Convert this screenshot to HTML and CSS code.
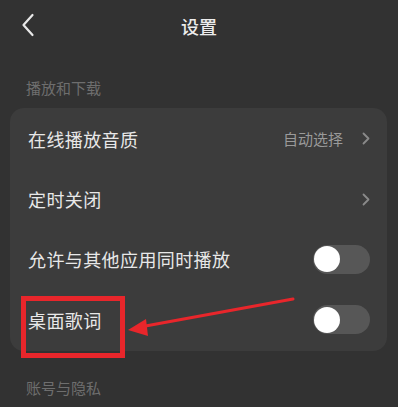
FILE: index.html
```html
<!DOCTYPE html>
<html lang="zh">
<head>
<meta charset="utf-8">
<link rel="stylesheet" href="styles.css">
</head>
<body>
<div class="page">
  <header class="topbar">
    <svg class="back" width="14" height="24" viewBox="0 0 14 24"><path d="M11.5 2 L2.5 12 L11.5 22" fill="none" stroke="#e8e8e8" stroke-width="2.2" stroke-linecap="round" stroke-linejoin="round"/></svg>
    <div class="title">设置</div>
  </header>
  <div class="section-label">播放和下载</div>
  <div class="card">
    <div class="row">
      <span class="label">在线播放音质</span>
      <span class="right"><span class="value">自动选择</span><svg class="chev" width="8" height="13" viewBox="0 0 8 13"><path d="M1.5 1.5 L6.5 6.5 L1.5 11.5" fill="none" stroke="#8a8a8a" stroke-width="1.8" stroke-linecap="round" stroke-linejoin="round"/></svg></span>
    </div>
    <div class="row">
      <span class="label">定时关闭</span>
      <span class="right"><svg class="chev" width="8" height="13" viewBox="0 0 8 13"><path d="M1.5 1.5 L6.5 6.5 L1.5 11.5" fill="none" stroke="#8a8a8a" stroke-width="1.8" stroke-linecap="round" stroke-linejoin="round"/></svg></span>
    </div>
    <div class="row">
      <span class="label">允许与其他应用同时播放</span>
      <span class="toggle"><span class="knob"></span></span>
    </div>
    <div class="row">
      <span class="label">桌面歌词</span>
      <span class="toggle"><span class="knob"></span></span>
    </div>
  </div>
  <div class="section-label second">账号与隐私</div>

  <div class="highlight"></div>
  <svg class="arrow" width="398" height="407" viewBox="0 0 398 407">
    <line x1="293" y1="299" x2="140" y2="327" stroke="#e8262b" stroke-width="3" stroke-linecap="round"/>
    <polygon points="128,330 146,319 148,336" fill="#e8262b"/>
  </svg>
</div>
</body>
</html>
```

FILE: styles.css
```css
html, body {
  margin: 0;
  padding: 0;
  background: #323232;
}
.page {
  position: relative;
  width: 398px;
  height: 407px;
  overflow: hidden;
  font-family: "Noto Sans CJK SC", "Noto Sans", sans-serif;
  color: #e6e6e6;
}
.topbar {
  position: relative;
  height: 52px;
  display: flex;
  align-items: center;
  justify-content: center;
}
.back {
  position: absolute;
  left: 21px;
  top: 13px;
}
.title {
  font-size: 18px;
  color: #ececec;
  line-height: 24px;
  font-weight: 500;
}
.section-label {
  margin-top: 26px;
  padding-left: 26px;
  font-size: 15px;
  line-height: 20px;
  color: #6e6e6e;
}
.section-label.second {
  margin-top: 27px;
}
.card {
  margin: 10px 11px 0 10px;
  background: #3c3c3c;
  border-radius: 14px;
  padding: 0 0 1px;
}
.row {
  height: 61px;
  display: flex;
  align-items: center;
  justify-content: space-between;
  padding: 0 17px 0 18px;
}
.row:nth-child(2), .row:nth-child(3) {
  height: 60px;
}
.label {
  font-size: 18px;
  letter-spacing: 0.4px;
  color: #e8e8e8;
}
.right {
  display: flex;
  align-items: center;
  gap: 19px;
}
.value {
  font-size: 15px;
  color: #9a9a9a;
}
.chev {
  display: block;
}
.toggle {
  width: 57px;
  height: 29px;
  border-radius: 15px;
  background: #575757;
  display: flex;
  align-items: center;
  padding-left: 1px;
  box-sizing: border-box;
}
.knob {
  width: 26px;
  height: 26px;
  border-radius: 50%;
  background: #ffffff;
}
.highlight {
  position: absolute;
  left: 21px;
  top: 296px;
  width: 94px;
  height: 52px;
  border: 5px solid #e8262b;
}
.arrow {
  position: absolute;
  left: 0;
  top: 0;
}
```
